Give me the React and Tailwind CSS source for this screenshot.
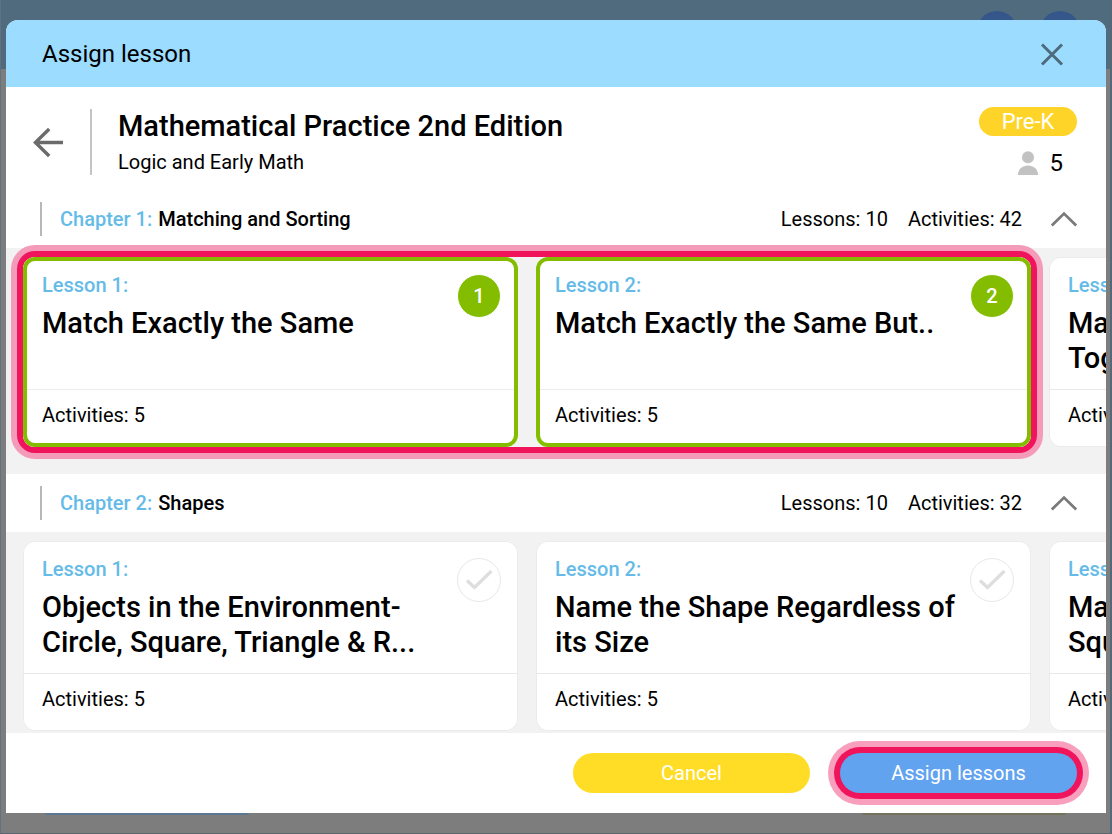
import { useState } from 'react'

const CHAPTERS = [
  {
    id: 'c1',
    label: 'Chapter 1:',
    title: 'Matching and Sorting',
    lessonCount: 10,
    activityCount: 42,
    lessons: [
      { id: 'c1-l1', label: 'Lesson 1:', title: 'Match Exactly the Same', activities: 5 },
      { id: 'c1-l2', label: 'Lesson 2:', title: 'Match Exactly the Same But..', activities: 5 },
      { id: 'c1-l3', label: 'Lesson 3:', title: 'Match Things That Go\nTogether', activities: 5 },
    ],
  },
  {
    id: 'c2',
    label: 'Chapter 2:',
    title: 'Shapes',
    lessonCount: 10,
    activityCount: 32,
    lessons: [
      {
        id: 'c2-l1',
        label: 'Lesson 1:',
        title: 'Objects in the Environment-\nCircle, Square, Triangle & R...',
        activities: 5,
      },
      {
        id: 'c2-l2',
        label: 'Lesson 2:',
        title: 'Name the Shape Regardless of its Size',
        activities: 5,
      },
      { id: 'c2-l3', label: 'Lesson 3:', title: 'Match Circles and\nSquares', activities: 5 },
    ],
  },
]

function LessonCard({ lesson, order, onToggle }) {
  const selected = order > 0

  return (
    <article
      className={
        selected
          ? 'flex h-[190px] w-[495px] shrink-0 flex-col rounded-xl bg-white shadow-[inset_0_0_0_4px_#84bd00]'
          : 'flex h-[190px] w-[495px] shrink-0 flex-col rounded-xl bg-white shadow-[inset_0_0_0_1px_#ebebeb]'
      }
    >
      <div className="flex flex-1 items-start pt-4 pr-[17px] pl-[19px]">
        <div className="min-w-0 flex-1">
          <p className="text-xl leading-6 font-medium text-[#65bbe8]">{lesson.label}</p>
          <h3 className="mt-[9px] text-[29px] leading-[35px] font-medium whitespace-pre-line text-black">
            {lesson.title}
          </h3>
        </div>
        <button
          type="button"
          aria-pressed={selected}
          aria-label={`Select ${lesson.title}`}
          onClick={() => onToggle(lesson.id)}
          className={
            selected
              ? 'mt-px flex size-11 shrink-0 items-center justify-center rounded-full border border-white bg-[#84bd00] text-xl font-medium text-white'
              : 'mt-px flex size-11 shrink-0 items-center justify-center rounded-full border border-[#e8e8e8] bg-white'
          }
        >
          {selected ? (
            order
          ) : (
            <svg viewBox="0 0 44 44" className="size-11 shrink-0" fill="none" aria-hidden="true">
              <path d="M10 22.5 L17.5 29.5 L34.5 13" stroke="#dedede" strokeWidth="3.4" />
            </svg>
          )}
        </button>
      </div>
      <div className={selected ? 'mx-1 border-t border-[#ececec]' : 'border-t border-[#e8e8e8]'} />
      <p className="h-[57px] pt-[13px] pl-[19px] text-xl leading-6 text-black">
        Activities: {lesson.activities}
      </p>
    </article>
  )
}

function Chapter({ chapter, selected, onToggle }) {
  const [open, setOpen] = useState(true)
  const picked = chapter.lessons.filter((l) => selected.includes(l.id))
  const rest = chapter.lessons.filter((l) => !selected.includes(l.id))

  return (
    <section>
      <div className="flex h-[58px] items-center bg-white pr-7 pl-[34px] text-xl leading-6">
        <div className="mr-[18px] h-[34px] w-0.5 bg-[#b8b8b8]" />
        <h2 className="flex flex-1 gap-1.5 font-medium text-black">
          <span className="text-[#65bbe8]">{chapter.label}</span>
          <span>{chapter.title}</span>
        </h2>
        <span>Lessons: {chapter.lessonCount}</span>
        <span className="ml-5">Activities: {chapter.activityCount}</span>
        <button
          type="button"
          aria-expanded={open}
          aria-label="Toggle chapter"
          onClick={() => setOpen(!open)}
          className="ml-7"
        >
          <svg viewBox="0 0 28 16" className="h-4 w-7" fill="none" aria-hidden="true">
            <path d="M1.8 14.5 L14 2.6 L26.2 14.5" stroke="#7a7a7a" strokeWidth="2.8" />
          </svg>
        </button>
      </div>
      {open ? (
        <div className="flex gap-[18px] bg-[#f2f2f2] px-[17px] pt-[9px] pb-[27px]">
          {picked.length > 0 ? (
            <div className="flex shrink-0 gap-[18px] rounded-xl shadow-[0_0_0_6px_#f0145c,0_0_0_12px_#f49bb9]">
              {picked.map((l) => (
                <LessonCard
                  key={l.id}
                  lesson={l}
                  order={selected.indexOf(l.id) + 1}
                  onToggle={onToggle}
                />
              ))}
            </div>
          ) : null}
          {rest.map((l) => (
            <LessonCard key={l.id} lesson={l} order={0} onToggle={onToggle} />
          ))}
        </div>
      ) : null}
    </section>
  )
}

export default function App() {
  const [selected, setSelected] = useState(['c1-l1', 'c1-l2'])

  function toggle(id) {
    setSelected((prev) => (prev.includes(id) ? prev.filter((x) => x !== id) : [...prev, id]))
  }

  return (
    <div className="relative flex h-screen flex-col overflow-hidden bg-[#7d7d7d] px-1.5 pt-5 pb-[21px] font-['Roboto',sans-serif] text-black">
      {/* dimmed page behind the dialog */}
      <div className="absolute inset-x-0 top-0 h-[69px] bg-[#4f6b7d]" />
      <div className="absolute top-[11px] right-[95px] size-10 rounded-full bg-[#35568a]" />
      <div className="absolute top-[11px] right-8 size-10 rounded-full bg-[#35568a]" />
      <div className="absolute inset-y-0 right-0 w-0.5 bg-[#53697a]" />
      <div className="absolute inset-y-0 left-0 w-px bg-[#5f7382]" />
      <div className="absolute inset-x-0 bottom-0 h-px bg-[#5c6670]" />
      <div className="absolute bottom-[19px] left-[45px] h-1 w-[204px] rounded-full bg-[#5c7892]" />
      <div className="absolute right-[46px] bottom-[19px] h-1 w-[204px] rounded-full bg-[#74745a]" />

      <div
        role="dialog"
        aria-labelledby="dialog-title"
        className="relative flex min-h-0 flex-1 flex-col overflow-hidden rounded-t-xl bg-white"
      >
        <header className="flex h-[67px] shrink-0 items-center justify-between bg-[#9bdcff] pr-[42px] pl-9">
          <h1 id="dialog-title" className="text-2xl">
            Assign lesson
          </h1>
          <button type="button" aria-label="Close">
            <svg viewBox="0 0 24 24" className="size-6" fill="none" aria-hidden="true">
              <path d="M2 2.5 L22 22.5 M22 2.5 L2 22.5" stroke="#4d6b7c" strokeWidth="3" />
            </svg>
          </button>
        </header>

        <div className="flex h-[103px] shrink-0 items-start bg-white pr-[29px] pl-[27px]">
          <button type="button" aria-label="Back" className="mt-10">
            <svg viewBox="0 0 30 32" className="h-8 w-[30px]" fill="none" aria-hidden="true">
              <path d="M30 15.5 H3 M16.2 2 L2.4 15.5 L16.2 29" stroke="#6b6b6b" strokeWidth="3.4" />
            </svg>
          </button>
          <div className="mt-[22px] ml-[27px] h-[66px] w-0.5 bg-[#c4c4c4]" />
          <div className="mt-[22px] ml-[26px] flex-1">
            <h2 className="text-[29px] leading-[35px] font-medium">
              Mathematical Practice 2nd Edition
            </h2>
            <p className="mt-1.5 text-xl leading-6">Logic and Early Math</p>
          </div>
          <div className="mt-5 flex flex-col">
            <span className="flex h-[29px] w-[98px] items-center justify-center rounded-full bg-[#ffd428] text-[22px] leading-6 text-white">
              Pre-K
            </span>
            <span className="mt-[13px] flex items-center justify-end gap-3 pr-3.5 text-2xl leading-7">
              <svg viewBox="0 0 20 24" className="h-6 w-5" fill="#c2c2c2" aria-hidden="true">
                <circle cx="10" cy="6.2" r="6" />
                <path d="M0 24 C0 18 4.5 14.5 10 14.5 S20 18 20 24 Z" />
              </svg>
              5
            </span>
          </div>
        </div>

        <div className="min-h-0 flex-1 overflow-hidden">
          {CHAPTERS.map((c) => (
            <Chapter key={c.id} chapter={c} selected={selected} onToggle={toggle} />
          ))}
        </div>

        <footer className="flex h-20 shrink-0 items-center justify-end gap-[30px] bg-white pr-[29px] text-xl text-white">
          <button type="button" className="h-10 w-[237px] rounded-full bg-[#ffdd26]">
            Cancel
          </button>
          <button
            type="button"
            className="h-10 w-[237px] rounded-full bg-[#62a3ef] shadow-[0_0_0_6px_#f0145c,0_0_0_12px_#f79fbd]"
          >
            Assign lessons
          </button>
        </footer>
      </div>
    </div>
  )
}
